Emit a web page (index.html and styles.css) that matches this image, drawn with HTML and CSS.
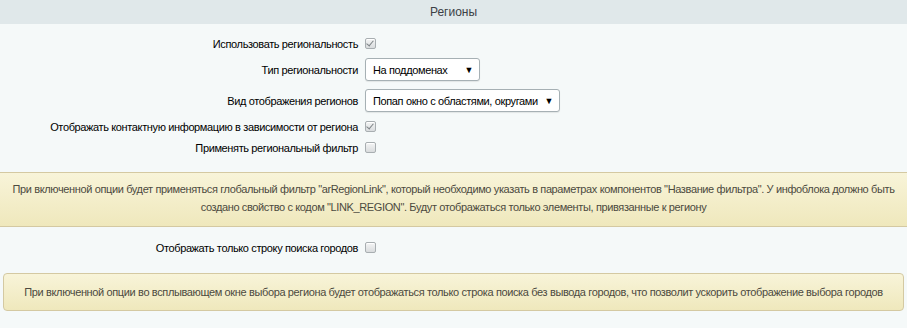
FILE: index.html
```html
<!DOCTYPE html>
<html lang="ru">
  <head>
    <meta charset="UTF-8" />
    <title>Регионы</title>
    <link rel="stylesheet" href="styles.css">
  </head>
  <body>
    <div class="section-head">Регионы</div>
    <div class="section-body">
      <div class="opt-row">
        <div class="opt-label">Использовать региональность</div>
        <div class="opt-field"><span class="chk checked"></span></div>
      </div>
      <div class="opt-row tall">
        <div class="opt-label">Тип региональности</div>
        <div class="opt-field"><span class="sel sel-type">На поддоменах<i class="arr">&#9660;</i></span></div>
      </div>
      <div class="opt-row tall">
        <div class="opt-label">Вид отображения регионов</div>
        <div class="opt-field"><span class="sel sel-view">Попап окно с областями, округами<i class="arr">&#9660;</i></span></div>
      </div>
      <div class="opt-row">
        <div class="opt-label">Отображать контактную информацию в зависимости от региона</div>
        <div class="opt-field"><span class="chk checked"></span></div>
      </div>
      <div class="opt-row">
        <div class="opt-label">Применять региональный фильтр</div>
        <div class="opt-field"><span class="chk"></span></div>
      </div>

      <div class="note note-wide">
        При включенной опции будет применяться глобальный фильтр "arRegionLink", который необходимо указать в параметрах компонентов "Название фильтра". У инфоблока должно быть создано свойство с кодом "LINK_REGION". Будут отображаться только элементы, привязанные к региону
      </div>

      <div class="opt-row">
        <div class="opt-label">Отображать только строку поиска городов</div>
        <div class="opt-field"><span class="chk"></span></div>
      </div>

      <div class="note note-box">
        При включенной опции во всплывающем окне выбора региона будет отображаться только строка поиска без вывода городов, что позволит ускорить отображение выбора городов
      </div>
    </div>
  </body>
</html>
```

FILE: styles.css
```css
body {
  margin: 0;
  padding: 0;
  background: #f5f9f9;
  font-family: "Liberation Sans", Arial, sans-serif;
  font-size: 11px;
  letter-spacing: -0.37px;
  color: #000;
}
.section-head {
  height: 24px;
  line-height: 24px;
  background: #e0e8ea;
  text-align: center;
  font-size: 12px;
  letter-spacing: 0;
  color: #3c4146;
}
.section-body {
  padding-top: 9px;
}
.opt-row {
  display: flex;
  align-items: center;
  height: 21px;
}
.opt-row.tall {
  height: 31px;
}
.opt-label {
  width: 358px;
  text-align: right;
  flex-shrink: 0;
  white-space: nowrap;
}
.opt-field {
  padding-left: 7px;
  display: flex;
  align-items: center;
}
.chk {
  display: inline-block;
  width: 9px;
  height: 9px;
  border: 1px solid #a8aeb1;
  border-radius: 2px;
  background: linear-gradient(#f4f5f5, #d9dcde);
  box-shadow: inset 0 1px 0 #fff;
  position: relative;
}
.chk.checked::after {
  content: "";
  position: absolute;
  left: 2px;
  top: 0px;
  width: 3px;
  height: 6px;
  border: solid #7d8386;
  border-width: 0 1.5px 1.5px 0;
  transform: rotate(40deg);
}
.sel {
  display: inline-flex;
  align-items: center;
  justify-content: space-between;
  box-sizing: border-box;
  height: 23px;
  padding: 0 6px 0 7px;
  background: #fff;
  border: 1px solid #a6b0b4;
  border-radius: 3px;
  box-shadow: 0 1px 1px rgba(0, 0, 0, 0.08);
  white-space: nowrap;
  color: #000;
}
.sel-type {
  width: 115px;
}
.sel-view {
  width: 195px;
}
.arr {
  font-style: normal;
  font-size: 9px;
}
.note {
  color: #4c4a40;
  line-height: 18px;
  text-align: center;
  background: linear-gradient(#f8f4d9, #efe8bc);
  border: 1px solid #d4c9a2;
}
.note-wide {
  margin-top: 14px;
  margin-bottom: 10px;
  border-left: none;
  border-right: none;
  padding: 7px 4px 10px;
}
.note-box {
  margin: 15px 3px 0 3px;
  border-radius: 4px;
  padding: 9px 6px 9px;
}
```
